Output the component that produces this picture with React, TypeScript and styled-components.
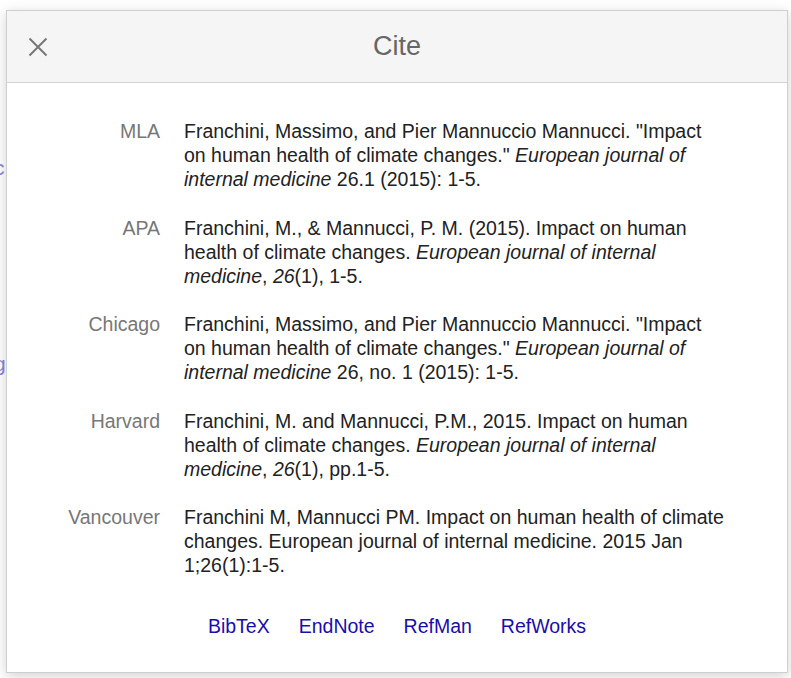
import React from "react";
import styled, { createGlobalStyle } from "styled-components";

const GlobalStyle = createGlobalStyle`
  html, body { margin: 0; padding: 0; background: #fff; }
  body { font-family: "Liberation Sans", Arial, sans-serif; }
`;

const Page = styled.div`
  position: relative;
  width: 791px;
  height: 678px;
  overflow: hidden;
  background: #fff;
  padding: 10px 0 0 6px;
  box-sizing: border-box;
`;

const Backdrop = styled.div`
  position: absolute;
  left: 0;
  top: 0;
  width: 100%;
  height: 100%;
  z-index: 0;
`;

const GhostLetter = styled.span<{ $top: number }>`
  position: absolute;
  left: -6px;
  top: ${(p) => p.$top}px;
  font-size: 21px;
  color: #8d83d6;
  line-height: 24px;
`;

const Dialog = styled.div`
  position: relative;
  z-index: 1;
  width: 782px;
  height: 663px;
  box-sizing: border-box;
  border: 1px solid #cfcfcf;
  background: #fff;
  box-shadow: 0 3px 12px rgba(0, 0, 0, 0.18);
  display: flex;
  flex-direction: column;
`;

const Header = styled.div`
  height: 71px;
  flex: none;
  background: #f5f5f5;
  border-bottom: 1px solid #d4d4d4;
  display: grid;
  grid-template-columns: 1fr auto 1fr;
  align-items: center;
`;

const CloseButton = styled.button`
  justify-self: start;
  margin-left: 19px;
  width: 24px;
  height: 24px;
  padding: 0;
  border: 0;
  background: transparent;
  display: flex;
  align-items: center;
  justify-content: center;
  cursor: pointer;
`;

const Title = styled.h2`
  margin: 0 0 2px 0;
  font-size: 27px;
  font-weight: normal;
  color: #666;
  line-height: 30px;
`;

const Body = styled.div`
  padding: 36px 0 0 0;
  display: flex;
  flex-direction: column;
`;

const CiteRow = styled.div`
  display: grid;
  grid-template-columns: 153px 542px;
  column-gap: 24px;
  padding-bottom: 24.5px;
  font-size: 19.5px;
  line-height: 24px;
`;

const Label = styled.div`
  text-align: right;
  color: #777;
`;

const Citation = styled.div`
  color: #222;
  i { font-style: italic; }
`;

const Links = styled.div`
  display: flex;
  justify-content: center;
  gap: 29px;
  margin-top: 12px;
  font-size: 19.5px;
  line-height: 24px;
`;

const ExportLink = styled.a`
  color: #1a0dab;
  text-decoration: none;
`;

const rows: { label: string; text: React.ReactNode }[] = [
  {
    label: "MLA",
    text: (
      <>
        Franchini, Massimo, and Pier Mannuccio Mannucci. "Impact on human health of climate changes."{" "}
        <i>European journal of internal medicine</i> 26.1 (2015): 1-5.
      </>
    ),
  },
  {
    label: "APA",
    text: (
      <>
        Franchini, M., &amp; Mannucci, P. M. (2015). Impact on human health of climate changes.{" "}
        <i>European journal of internal medicine</i>, <i>26</i>(1), 1-5.
      </>
    ),
  },
  {
    label: "Chicago",
    text: (
      <>
        Franchini, Massimo, and Pier Mannuccio Mannucci. "Impact on human health of climate changes."{" "}
        <i>European journal of internal medicine</i> 26, no. 1 (2015): 1-5.
      </>
    ),
  },
  {
    label: "Harvard",
    text: (
      <>
        Franchini, M. and Mannucci, P.M., 2015. Impact on human health of climate changes.{" "}
        <i>European journal of internal medicine</i>, <i>26</i>(1), pp.1-5.
      </>
    ),
  },
  {
    label: "Vancouver",
    text: (
      <>
        Franchini M, Mannucci PM. Impact on human health of climate changes. European journal of internal
        medicine. 2015 Jan 1;26(1):1-5.
      </>
    ),
  },
];

export default function App() {
  return (
    <>
      <GlobalStyle />
      <Page>
        <Backdrop>
          <GhostLetter $top={156}>c</GhostLetter>
          <GhostLetter $top={352}>g</GhostLetter>
        </Backdrop>
        <Dialog>
          <Header>
            <CloseButton aria-label="Close">
              <svg width="20" height="20" viewBox="0 0 20 20">
                <path d="M1.5 1.5 L18.5 18.5 M18.5 1.5 L1.5 18.5" stroke="#777" strokeWidth="2" fill="none" />
              </svg>
            </CloseButton>
            <Title>Cite</Title>
            <span />
          </Header>
          <Body>
            {rows.map((r) => (
              <CiteRow key={r.label}>
                <Label>{r.label}</Label>
                <Citation>{r.text}</Citation>
              </CiteRow>
            ))}
            <Links>
              <ExportLink href="#">BibTeX</ExportLink>
              <ExportLink href="#">EndNote</ExportLink>
              <ExportLink href="#">RefMan</ExportLink>
              <ExportLink href="#">RefWorks</ExportLink>
            </Links>
          </Body>
        </Dialog>
      </Page>
    </>
  );
}
